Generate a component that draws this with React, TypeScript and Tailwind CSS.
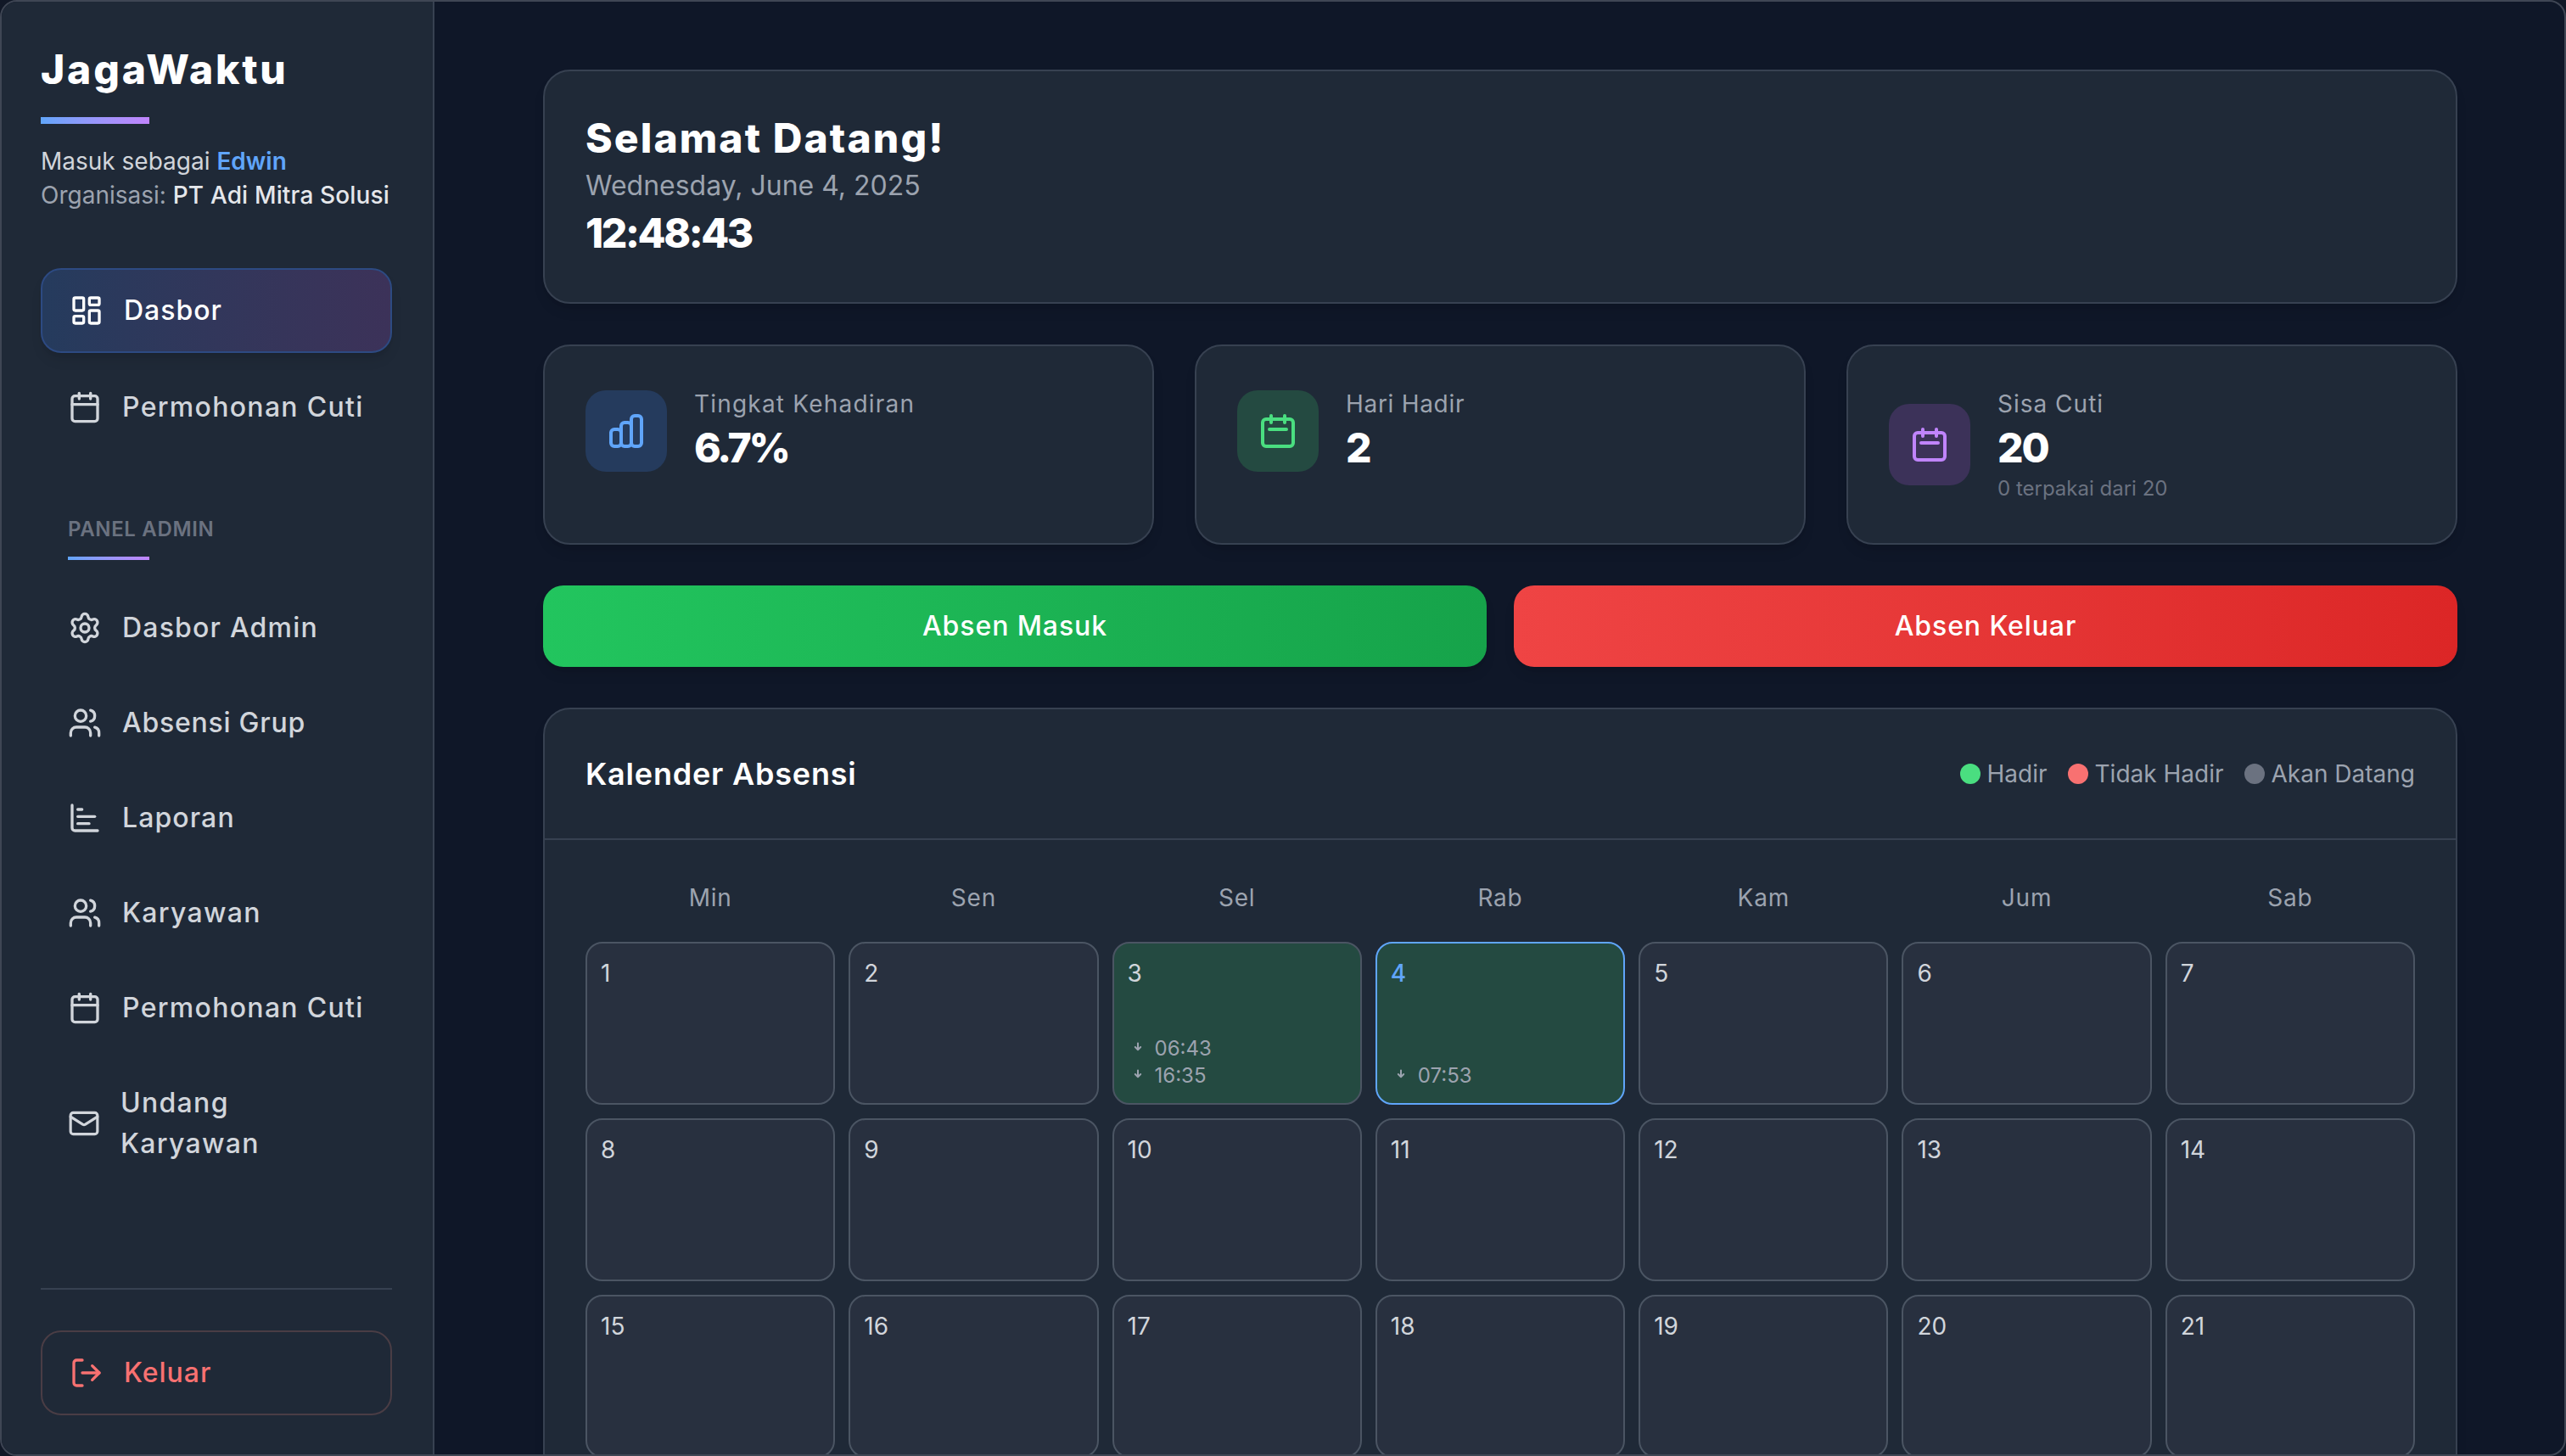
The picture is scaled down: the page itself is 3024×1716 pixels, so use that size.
import React from "react";
import { LayoutDashboard, Calendar, Settings, Users, ChartBar, Mail, LogOut } from "lucide-react";

const Nav = ({ icon: Icon, label, track = "tracking-[1.3px]", iconCls = "w-[40px] h-[40px]" }: any) => (
  <div className="flex items-center gap-[24px] pl-[32px] pr-[30px] py-[24px] text-[32px] leading-[48px] font-medium text-[#d1d5db]">
    <Icon className={`${iconCls} shrink-0`} />
    <span className={track}>{label}</span>
  </div>
);

const HeroCalendar = ({ cls }: { cls: string }) => (
  <svg viewBox="0 0 24 24" fill="none" stroke="currentColor" strokeWidth={2} strokeLinecap="round" strokeLinejoin="round" className={`w-[48px] h-[48px] ${cls}`}>
    <path d="M8 7V3m8 4V3m-9 8h10M5 21h14a2 2 0 002-2V7a2 2 0 00-2-2H5a2 2 0 00-2 2v12a2 2 0 002 2z" />
  </svg>
);

const HeroChart = ({ cls }: { cls: string }) => (
  <svg viewBox="0 0 24 24" fill="none" stroke="currentColor" strokeWidth={2} strokeLinecap="round" strokeLinejoin="round" className={`w-[48px] h-[48px] ${cls}`}>
    <path d="M9 19v-6a2 2 0 00-2-2H5a2 2 0 00-2 2v6a2 2 0 002 2h2a2 2 0 002-2zm0 0V9a2 2 0 012-2h2a2 2 0 012 2v10m-6 0a2 2 0 002 2h2a2 2 0 002-2m0 0V5a2 2 0 012-2h2a2 2 0 012 2v14a2 2 0 01-2 2h-2a2 2 0 01-2-2z" />
  </svg>
);

const Arrow = () => (
  <svg viewBox="0 0 24 24" fill="none" stroke="#9ca3af" strokeWidth={2} strokeLinecap="round" strokeLinejoin="round" className="w-[24px] h-[24px] shrink-0">
    <path d="M12 5.5V13M8.8 10 12 13.2 15.2 10" />
  </svg>
);

const Stat = ({ tile, children, label, labelTrack, value, valueTrack, sub }: any) => (
  <div className="rounded-[32px] border-2 border-[#374151] bg-[#1f2937] p-[48px] flex items-start shadow-lg">
    <div className="flex items-center gap-[32px]">
      <div className={`w-[96px] h-[96px] rounded-[24px] flex items-center justify-center shrink-0 ${tile}`}>{children}</div>
      <div>
        <div className={`text-[28px] leading-[40px] font-normal text-[#9ca3af] ${labelTrack}`}>{label}</div>
        <div className={`text-[48px] leading-[64px] font-extrabold text-white ${valueTrack}`}>{value}</div>
        {sub && <div className="text-[24px] leading-[32px] text-[#6b7280]">{sub}</div>}
      </div>
    </div>
  </div>
);

const Legend = ({ dot, label }: { dot: string; label: string }) => (
  <div className="flex items-center gap-[8px]">
    <span className={`w-[24px] h-[24px] rounded-full ${dot}`} />
    <span className="text-[28px] leading-[40px] text-[#9ca3af]">{label}</span>
  </div>
);

const days = ["Min", "Sen", "Sel", "Rab", "Kam", "Jum", "Sab"];
const cells = Array.from({ length: 21 }, (_, i) => i + 1);

const Cell = ({ n }: { n: number }) => {
  const present = n === 3 || n === 4;
  const today = n === 4;
  const times = n === 3 ? ["06:43", "16:35"] : n === 4 ? ["07:53"] : [];
  return (
    <div
      className={`h-[192px] rounded-[20px] border-2 p-[16px] flex flex-col justify-between ${
        present ? "bg-[#244a41]" : "bg-[#28303f]"
      } ${today ? "border-[#60a5fa]" : "border-[#4b5563]"}`}
    >
      <div className={`text-[28px] leading-[38px] ${today ? "text-[#60a5fa] font-medium" : "text-[#d1d5db]"}`}>{n}</div>
      {times.length > 0 && (
        <div className="flex flex-col">
          {times.map((t) => (
            <div key={t} className="flex items-center gap-[8px] text-[24px] leading-[32px] text-[#9ca3af]">
              <Arrow />
              <span>{t}</span>
            </div>
          ))}
        </div>
      )}
    </div>
  );
};

export default function App() {
  return (
    <div className="h-screen w-full bg-[#111827] [font-family:Inter,sans-serif]">
      <div className="h-full w-full flex overflow-hidden rounded-[20px] border-2 border-[#3f4654] bg-[#0f1728]">
        <aside className="w-[510px] shrink-0 h-full bg-[#1f2937] border-r-2 border-[#374151] pl-[46px] pr-[48px] pt-[48px] pb-[46px] flex flex-col">
          <div className="text-[48px] leading-[64px] font-extrabold text-white tracking-[2.8px] whitespace-nowrap">JagaWaktu</div>
          <div className="mt-[24px] h-[8px] w-[128px] bg-gradient-to-r from-[#60a5fa] to-[#c084fc]" />
          <div className="mt-[24px] text-[28px] leading-[40px] text-[#d1d5db]">
            Masuk sebagai <span className="font-semibold text-[#60a5fa]">Edwin</span>
          </div>
          <div className="text-[28px] leading-[40px] text-[#9ca3af] whitespace-nowrap">
            Organisasi: <span className="font-medium text-[#e5e7eb] tracking-[0.15px]">PT Adi Mitra Solusi</span>
          </div>

          <nav className="mt-[66px] flex flex-col gap-[16px]">
            <div className="flex items-center gap-[24px] pl-[32px] pr-[30px] py-[24px] rounded-[24px] border-2 border-[#2d4a82] bg-gradient-to-r from-[#253b5d] to-[#3c3259] text-[32px] leading-[48px] font-medium text-white shadow-lg">
              <LayoutDashboard className="w-[40px] h-[40px] shrink-0" />
              <span className="tracking-[1px]">Dasbor</span>
            </div>
            <Nav icon={Calendar} label="Permohonan Cuti" />
          </nav>

          <div className="mt-[80px] pl-[32px]">
            <div className="text-[24px] leading-[32px] font-semibold tracking-[0.65px] text-[#6b7280]">PANEL ADMIN</div>
            <div className="mt-[16px] h-[4px] w-[96px] bg-gradient-to-r from-[#60a5fa] to-[#c084fc]" />
          </div>

          <nav className="mt-[32px] flex flex-col gap-[16px]">
            <Nav icon={Settings} label="Dasbor Admin" track="tracking-[1.2px]" />
            <Nav icon={Users} label="Absensi Grup" track="tracking-[0.75px]" />
            <Nav icon={ChartBar} label="Laporan" track="tracking-[1.1px]" />
            <Nav icon={Users} label="Karyawan" track="tracking-[1.3px]" />
            <Nav icon={Calendar} label="Permohonan Cuti" />
            <Nav icon={Mail} label={<>Undang<br />Karyawan</>} track="tracking-[1.3px]" iconCls="w-[38px] h-[38px]" />
          </nav>

          <div className="mt-auto border-t-2 border-[#374151] pt-[48px]">
            <div className="flex items-center gap-[24px] pl-[32px] py-[24px] rounded-[24px] border-2 border-[#4a3d45] text-[32px] leading-[48px] font-medium text-[#f87171]">
              <LogOut className="w-[40px] h-[40px] shrink-0" />
              <span className="tracking-[1px]">Keluar</span>
            </div>
          </div>
        </aside>

        <main className="flex-1 min-w-0 h-full pl-[128px] pr-[126px] pt-[80px] flex flex-col gap-[48px] overflow-hidden">
          <section className="shrink-0 rounded-[32px] border-2 border-[#374151] bg-[#1f2937] px-[48px] py-[48px] shadow-lg h-[276px]">
            <div className="text-[48px] leading-[62px] font-extrabold text-white tracking-[2.1px]">Selamat Datang!</div>
            <div className="text-[32px] leading-[50px] text-[#9ca3af]">Wednesday, June 4, 2025</div>
            <div className="text-[48px] leading-[62px] font-extrabold text-white tracking-[-2.4px]">12:48:43</div>
          </section>

          <section className="shrink-0 grid grid-cols-3 gap-[48px]">
            <Stat tile="bg-[#253b5d]" label="Tingkat Kehadiran" labelTrack="tracking-[1.2px]" value="6.7%" valueTrack="tracking-[-3.2px]">
              <HeroChart cls="text-[#60a5fa]" />
            </Stat>
            <Stat tile="bg-[#244a41]" label="Hari Hadir" labelTrack="tracking-[0.7px]" value="2" valueTrack="">
              <HeroCalendar cls="text-[#4ade80]" />
            </Stat>
            <Stat tile="bg-[#3c3259]" label="Sisa Cuti" labelTrack="tracking-[1px]" value="20" valueTrack="tracking-[-2px]" sub="0 terpakai dari 20">
              <HeroCalendar cls="text-[#c084fc]" />
            </Stat>
          </section>

          <section className="shrink-0 grid grid-cols-2 gap-[32px]">
            <button className="h-[96px] rounded-[24px] bg-gradient-to-r from-[#22c55e] to-[#16a34a] text-white text-[32px] font-medium tracking-[0.9px] shadow-lg">
              Absen Masuk
            </button>
            <button className="h-[96px] rounded-[24px] bg-gradient-to-r from-[#ef4444] to-[#dc2626] text-white text-[32px] font-medium tracking-[0.9px] shadow-lg">
              Absen Keluar
            </button>
          </section>

          <section className="shrink-0 rounded-[32px] border-2 border-[#374151] bg-[#1f2937] shadow-lg">
            <div className="flex items-center justify-between px-[48px] py-[48px] border-b-2 border-[#374151]">
              <div className="text-[36px] leading-[56px] font-semibold text-white tracking-[0.8px]">Kalender Absensi</div>
              <div className="flex items-center gap-[24px]">
                <Legend dot="bg-[#4ade80]" label="Hadir" />
                <Legend dot="bg-[#f87171]" label="Tidak Hadir" />
                <Legend dot="bg-[#6b7280]" label="Akan Datang" />
              </div>
            </div>
            <div className="p-[48px]">
              <div className="grid grid-cols-7 gap-[16px] mb-[32px]">
                {days.map((d) => (
                  <div key={d} className="text-center text-[28px] leading-[40px] text-[#9ca3af] tracking-[0.8px]">{d}</div>
                ))}
              </div>
              <div className="grid grid-cols-7 gap-[16px]">
                {cells.map((n) => (
                  <Cell key={n} n={n} />
                ))}
              </div>
            </div>
          </section>
        </main>
      </div>
    </div>
  );
}
